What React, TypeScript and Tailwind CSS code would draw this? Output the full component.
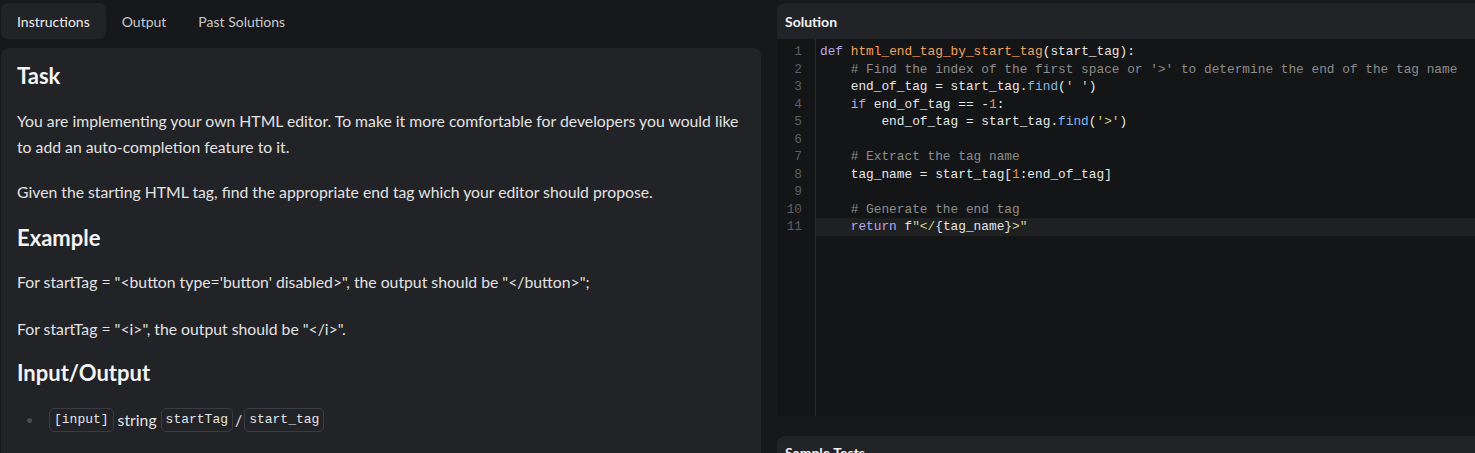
import React from "react";

const K = ({ children }: { children: React.ReactNode }) => <span className="text-[#b8a6f0]">{children}</span>;
const F = ({ children }: { children: React.ReactNode }) => <span className="text-[#f2a25c]">{children}</span>;
const C = ({ children }: { children: React.ReactNode }) => <span className="text-[#8c8c8c]">{children}</span>;
const M = ({ children }: { children: React.ReactNode }) => <span className="text-[#86b7ec]">{children}</span>;
const S = ({ children }: { children: React.ReactNode }) => <span className="text-[#cfd28a]">{children}</span>;
const N = ({ children }: { children: React.ReactNode }) => <span className="text-[#f08d4f]">{children}</span>;

const lines: React.ReactNode[] = [
  <><K>def</K> <F>html_end_tag_by_start_tag</F>(start_tag):</>,
  <>{"    "}<C># Find the index of the first space or '&gt;' to determine the end of the tag name</C></>,
  <>{"    "}end_of_tag = start_tag.<M>find</M>(<S>' '</S>)</>,
  <>{"    "}<K>if</K> end_of_tag == -<N>1</N>:</>,
  <>{"        "}end_of_tag = start_tag.<M>find</M>(<S>'&gt;'</S>)</>,
  <>{" "}</>,
  <>{"    "}<C># Extract the tag name</C></>,
  <>{"    "}tag_name = start_tag[<N>1</N>:end_of_tag]</>,
  <>{" "}</>,
  <>{"    "}<C># Generate the end tag</C></>,
  <>{"    "}<K>return</K> f<S>"&lt;/</S>{"{tag_name}"}<S>&gt;"</S></>,
];

const Chip = ({ children }: { children: React.ReactNode }) => (
  <span className="inline-flex h-[24px] items-center rounded-[5px] border border-[#3a3b40] px-[4px] font-['Liberation_Mono',monospace] text-[13px] text-[#e4e4e4]">
    {children}
  </span>
);

export default function App() {
  return (
    <div className="flex h-[453px] w-[1475px] overflow-hidden bg-[#17181b] font-['Lato',sans-serif]">
      {/* Left column */}
      <div className="flex w-[761px] shrink-0 flex-col">
        <div className="flex h-[48px] shrink-0 items-start pl-[1px] pt-[3px] text-[14px]">
          <div className="flex h-[36px] items-center rounded-[7px] bg-[#222327] px-4 text-[#ececec]">Instructions</div>
          <div className="flex h-[36px] items-center px-4 text-[#c9c9c9]">Output</div>
          <div className="flex h-[36px] items-center px-4 text-[#c9c9c9]">Past Solutions</div>
        </div>
        <div className="ml-[1px] flex-1 rounded-t-[8px] bg-[#222327] pl-4 pr-3 pt-[14px] text-[15.75px] text-[#e2e2e2]">
          <h2 className="h-[28px] text-[22px] font-bold leading-[28px] text-[#f4f4f4]">Task</h2>
          <p className="mt-[18px] leading-[26px]">
            You are implementing your own HTML editor. To make it more comfortable for developers you would like to add an auto-completion feature to it.
          </p>
          <p className="mt-[19px] leading-[26px]">
            Given the starting HTML tag, find the appropriate end tag which your editor should propose.
          </p>
          <h2 className="mt-[19px] h-[28px] text-[22px] font-bold leading-[28px] text-[#f4f4f4]">Example</h2>
          <p className="mt-[17px] leading-[26px]">
            For startTag = "&lt;button type='button' disabled&gt;", the output should be "&lt;/button&gt;";
          </p>
          <p className="mt-[21px] leading-[26px]">For startTag = "&lt;i&gt;", the output should be "&lt;/i&gt;".</p>
          <h2 className="mt-[17px] h-[28px] text-[22px] font-bold leading-[28px] text-[#f4f4f4]">Input/Output</h2>
          <div className="mt-[20px] flex h-[26px] items-center">
            <span className="ml-[10px] mr-[17px] h-[5px] w-[5px] rounded-full bg-[#4a4b50]" />
            <Chip>[input]</Chip>
            <span className="mx-[4px]">string</span>
            <Chip>startTag</Chip>
            <span className="mx-[2px]">/</span>
            <Chip>start_tag</Chip>
          </div>
        </div>
      </div>

      {/* Right column */}
      <div className="ml-[16px] flex flex-1 flex-col pt-[3px]">
        <div className="flex shrink-0 flex-col overflow-hidden rounded-tl-[8px]">
          <div className="flex h-[36px] shrink-0 items-center bg-[#222327] px-[8px] text-[14px] font-bold text-[#f2f2f2]">Solution</div>
          <div className="flex h-[377px] shrink-0 bg-[#141516] font-['Liberation_Mono',monospace] text-[12.8px]">
            <div className="w-[39px] shrink-0 border-r border-[#2b2c30] pt-[4px] pr-[13px] text-right text-[#5d5f63]">
              {lines.map((_, i) => (
                <div key={i} className="h-[17.5px] leading-[17.5px]">{i + 1}</div>
              ))}
            </div>
            <div className="flex-1 pt-[4px] text-[#e6e6e6]">
              {lines.map((l, i) => (
                <div
                  key={i}
                  className={`h-[17.5px] whitespace-pre pl-[4px] leading-[17.5px] ${i === 10 ? "bg-[#1f2022]" : ""}`}
                >
                  {l}
                </div>
              ))}
            </div>
          </div>
        </div>
        <div className="mt-[20px] h-[40px] shrink-0 rounded-tl-[8px] bg-[#222327] px-[8px] pt-[6px] text-[14px] font-bold text-[#f2f2f2]">
          Sample Tests
        </div>
      </div>
    </div>
  );
}
